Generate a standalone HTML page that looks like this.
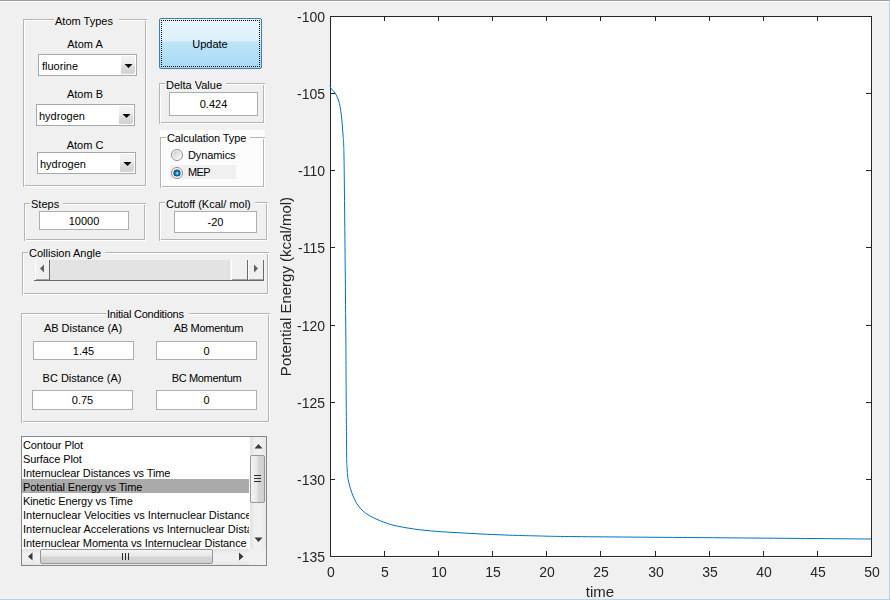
<!DOCTYPE html><html><head><meta charset="utf-8"><style>
html,body{margin:0;padding:0}
body{width:890px;height:600px;background:#f0f0f0;position:relative;overflow:hidden}
.ui{font-family:"Liberation Sans",sans-serif;font-size:11px;line-height:13px;color:#000}
.ax{font-family:"Liberation Sans",sans-serif;font-size:14px;line-height:16px;color:#262626;will-change:transform}
</style></head><body>
<div style="position:absolute;left:0px;top:0px;width:889px;height:1px;background:#9e9e9e"></div>
<div style="position:absolute;left:0px;top:1px;width:889px;height:1px;background:#fff"></div>
<div style="position:absolute;left:889px;top:0px;width:1px;height:600px;background:#b9d1ea"></div>
<div style="position:absolute;left:0px;top:599px;width:890px;height:1px;background:#b9d1ea"></div>
<div style="position:absolute;left:23px;top:19px;width:124px;height:1px;background:#b5b5b5"></div>
<div style="position:absolute;left:23px;top:19px;width:1px;height:168px;background:#b5b5b5"></div>
<div style="position:absolute;left:24px;top:20px;width:123px;height:1px;background:#fff"></div>
<div style="position:absolute;left:24px;top:20px;width:1px;height:167px;background:#fff"></div>
<div style="position:absolute;left:145px;top:21px;width:1px;height:165px;background:#b5b5b5"></div>
<div style="position:absolute;left:25px;top:185px;width:121px;height:1px;background:#b5b5b5"></div>
<div style="position:absolute;left:146px;top:20px;width:1px;height:167px;background:#fff"></div>
<div style="position:absolute;left:24px;top:186px;width:123px;height:1px;background:#fff"></div>
<div class="ui" style="position:absolute;left:54px;top:15px;white-space:nowrap;background:#f0f0f0;padding:0 6px 0 1px;letter-spacing:0px">Atom Types</div>
<div class="ui" style="position:absolute;left:-65px;top:38px;width:300px;text-align:center;">Atom A</div>
<div style="position:absolute;left:38px;top:54px;width:99px;height:22px;background:#fff;border:1px solid #a5a9b1;box-sizing:border-box"></div>
<div style="position:absolute;left:121px;top:56px;width:14px;height:18px;border-radius:0 2px 2px 0;background:linear-gradient(#f3f3f3,#ededed 45%,#dddddd 55%,#d2d2d2)"></div>
<svg style="position:absolute;left:0;top:0" width="890" height="600"><path d="M124.5 64h8l-4 4z" fill="#000"/></svg>
<div class="ui" style="position:absolute;left:42px;top:60px;white-space:nowrap;">fluorine</div>
<div class="ui" style="position:absolute;left:-65px;top:88px;width:300px;text-align:center;">Atom B</div>
<div style="position:absolute;left:36px;top:104px;width:99px;height:22px;background:#fff;border:1px solid #a5a9b1;box-sizing:border-box"></div>
<div style="position:absolute;left:119px;top:106px;width:14px;height:18px;border-radius:0 2px 2px 0;background:linear-gradient(#f3f3f3,#ededed 45%,#dddddd 55%,#d2d2d2)"></div>
<svg style="position:absolute;left:0;top:0" width="890" height="600"><path d="M122.5 114h8l-4 4z" fill="#000"/></svg>
<div class="ui" style="position:absolute;left:39px;top:110px;white-space:nowrap;">hydrogen</div>
<div class="ui" style="position:absolute;left:-65px;top:139px;width:300px;text-align:center;">Atom C</div>
<div style="position:absolute;left:37px;top:152px;width:99px;height:22px;background:#fff;border:1px solid #a5a9b1;box-sizing:border-box"></div>
<div style="position:absolute;left:120px;top:154px;width:14px;height:18px;border-radius:0 2px 2px 0;background:linear-gradient(#f3f3f3,#ededed 45%,#dddddd 55%,#d2d2d2)"></div>
<svg style="position:absolute;left:0;top:0" width="890" height="600"><path d="M123.5 162h8l-4 4z" fill="#000"/></svg>
<div class="ui" style="position:absolute;left:40px;top:158px;white-space:nowrap;">hydrogen</div>
<div style="position:absolute;left:159px;top:18px;width:103px;height:51px;border:1px solid #3c7fb1;border-radius:2px;box-sizing:border-box;background:linear-gradient(#e8f5fc 0px,#dcf0fb 22px,#bde4f8 23px,#a9daf6 49px)"></div>
<svg style="position:absolute;left:0;top:0" width="890" height="600" shape-rendering="crispEdges"><path d="M161 20h1v1h-1zM161 66h1v1h-1zM163 20h1v1h-1zM163 66h1v1h-1zM165 20h1v1h-1zM165 66h1v1h-1zM167 20h1v1h-1zM167 66h1v1h-1zM169 20h1v1h-1zM169 66h1v1h-1zM171 20h1v1h-1zM171 66h1v1h-1zM173 20h1v1h-1zM173 66h1v1h-1zM175 20h1v1h-1zM175 66h1v1h-1zM177 20h1v1h-1zM177 66h1v1h-1zM179 20h1v1h-1zM179 66h1v1h-1zM181 20h1v1h-1zM181 66h1v1h-1zM183 20h1v1h-1zM183 66h1v1h-1zM185 20h1v1h-1zM185 66h1v1h-1zM187 20h1v1h-1zM187 66h1v1h-1zM189 20h1v1h-1zM189 66h1v1h-1zM191 20h1v1h-1zM191 66h1v1h-1zM193 20h1v1h-1zM193 66h1v1h-1zM195 20h1v1h-1zM195 66h1v1h-1zM197 20h1v1h-1zM197 66h1v1h-1zM199 20h1v1h-1zM199 66h1v1h-1zM201 20h1v1h-1zM201 66h1v1h-1zM203 20h1v1h-1zM203 66h1v1h-1zM205 20h1v1h-1zM205 66h1v1h-1zM207 20h1v1h-1zM207 66h1v1h-1zM209 20h1v1h-1zM209 66h1v1h-1zM211 20h1v1h-1zM211 66h1v1h-1zM213 20h1v1h-1zM213 66h1v1h-1zM215 20h1v1h-1zM215 66h1v1h-1zM217 20h1v1h-1zM217 66h1v1h-1zM219 20h1v1h-1zM219 66h1v1h-1zM221 20h1v1h-1zM221 66h1v1h-1zM223 20h1v1h-1zM223 66h1v1h-1zM225 20h1v1h-1zM225 66h1v1h-1zM227 20h1v1h-1zM227 66h1v1h-1zM229 20h1v1h-1zM229 66h1v1h-1zM231 20h1v1h-1zM231 66h1v1h-1zM233 20h1v1h-1zM233 66h1v1h-1zM235 20h1v1h-1zM235 66h1v1h-1zM237 20h1v1h-1zM237 66h1v1h-1zM239 20h1v1h-1zM239 66h1v1h-1zM241 20h1v1h-1zM241 66h1v1h-1zM243 20h1v1h-1zM243 66h1v1h-1zM245 20h1v1h-1zM245 66h1v1h-1zM247 20h1v1h-1zM247 66h1v1h-1zM249 20h1v1h-1zM249 66h1v1h-1zM251 20h1v1h-1zM251 66h1v1h-1zM253 20h1v1h-1zM253 66h1v1h-1zM255 20h1v1h-1zM255 66h1v1h-1zM257 20h1v1h-1zM257 66h1v1h-1zM259 20h1v1h-1zM259 66h1v1h-1zM161 22h1v1h-1zM259 22h1v1h-1zM161 24h1v1h-1zM259 24h1v1h-1zM161 26h1v1h-1zM259 26h1v1h-1zM161 28h1v1h-1zM259 28h1v1h-1zM161 30h1v1h-1zM259 30h1v1h-1zM161 32h1v1h-1zM259 32h1v1h-1zM161 34h1v1h-1zM259 34h1v1h-1zM161 36h1v1h-1zM259 36h1v1h-1zM161 38h1v1h-1zM259 38h1v1h-1zM161 40h1v1h-1zM259 40h1v1h-1zM161 42h1v1h-1zM259 42h1v1h-1zM161 44h1v1h-1zM259 44h1v1h-1zM161 46h1v1h-1zM259 46h1v1h-1zM161 48h1v1h-1zM259 48h1v1h-1zM161 50h1v1h-1zM259 50h1v1h-1zM161 52h1v1h-1zM259 52h1v1h-1zM161 54h1v1h-1zM259 54h1v1h-1zM161 56h1v1h-1zM259 56h1v1h-1zM161 58h1v1h-1zM259 58h1v1h-1zM161 60h1v1h-1zM259 60h1v1h-1zM161 62h1v1h-1zM259 62h1v1h-1zM161 64h1v1h-1zM259 64h1v1h-1z" fill="#000"/></svg>
<div class="ui" style="position:absolute;left:60px;top:38px;width:300px;text-align:center;">Update</div>
<div style="position:absolute;left:159px;top:83px;width:106px;height:1px;background:#b5b5b5"></div>
<div style="position:absolute;left:159px;top:83px;width:1px;height:41px;background:#b5b5b5"></div>
<div style="position:absolute;left:160px;top:84px;width:105px;height:1px;background:#fff"></div>
<div style="position:absolute;left:160px;top:84px;width:1px;height:40px;background:#fff"></div>
<div style="position:absolute;left:263px;top:85px;width:1px;height:38px;background:#b5b5b5"></div>
<div style="position:absolute;left:161px;top:122px;width:103px;height:1px;background:#b5b5b5"></div>
<div style="position:absolute;left:264px;top:84px;width:1px;height:40px;background:#fff"></div>
<div style="position:absolute;left:160px;top:123px;width:105px;height:1px;background:#fff"></div>
<div class="ui" style="position:absolute;left:165px;top:79px;white-space:nowrap;background:#f0f0f0;padding:0 4px 0 1px;letter-spacing:0px">Delta Value</div>
<div style="position:absolute;left:169px;top:92px;width:89px;height:24px;background:#fff;border:1px solid #abadb3;box-sizing:border-box"></div>
<div class="ui" style="position:absolute;left:169px;width:89px;top:98px;text-align:center">0.424</div>
<div style="position:absolute;left:160px;top:130px;width:105px;height:58px;background:#fcfcfc"></div>
<div style="position:absolute;left:160px;top:137px;width:105px;height:1px;background:#b5b5b5"></div>
<div style="position:absolute;left:160px;top:137px;width:1px;height:51px;background:#b5b5b5"></div>
<div style="position:absolute;left:161px;top:138px;width:104px;height:1px;background:#fff"></div>
<div style="position:absolute;left:161px;top:138px;width:1px;height:50px;background:#fff"></div>
<div style="position:absolute;left:263px;top:139px;width:1px;height:48px;background:#b5b5b5"></div>
<div style="position:absolute;left:162px;top:186px;width:102px;height:1px;background:#b5b5b5"></div>
<div style="position:absolute;left:264px;top:138px;width:1px;height:50px;background:#fff"></div>
<div style="position:absolute;left:161px;top:187px;width:104px;height:1px;background:#fff"></div>
<div class="ui" style="position:absolute;left:166px;top:132px;white-space:nowrap;background:#fcfcfc;padding:0 4px 0 1px;letter-spacing:-0.12px">Calculation Type</div>
<div style="position:absolute;left:170px;top:165px;width:66px;height:14px;background:#f0f0f0"></div>
<svg style="position:absolute;left:0;top:0" width="890" height="600"><defs><linearGradient id="rg" x1="0" y1="0" x2="1" y2="1"><stop offset="0" stop-color="#c4c8cd"/><stop offset="0.5" stop-color="#e2e4e6"/><stop offset="1" stop-color="#fafafa"/></linearGradient><radialGradient id="bl" cx="50%" cy="50%" r="50%" fx="55%" fy="55%"><stop offset="0" stop-color="#b8f4ff"/><stop offset="0.35" stop-color="#2fa8e2"/><stop offset="0.7" stop-color="#0d5f9c"/><stop offset="1" stop-color="#0b2f58"/></radialGradient></defs><circle cx="177" cy="155" r="5.5" fill="#fff" stroke="#8a8a8a" stroke-width="1"/><circle cx="177" cy="155" r="4" fill="url(#rg)"/><circle cx="177" cy="173" r="5.5" fill="#fff" stroke="#8a8a8a" stroke-width="1"/><circle cx="177" cy="173" r="3.6" fill="url(#bl)"/></svg>
<div class="ui" style="position:absolute;left:188px;top:148.5px;white-space:nowrap;letter-spacing:-0.1px">Dynamics</div>
<div class="ui" style="position:absolute;left:188px;top:166px;white-space:nowrap;letter-spacing:-0.6px">MEP</div>
<div style="position:absolute;left:24px;top:203px;width:122px;height:1px;background:#b5b5b5"></div>
<div style="position:absolute;left:24px;top:203px;width:1px;height:38px;background:#b5b5b5"></div>
<div style="position:absolute;left:25px;top:204px;width:121px;height:1px;background:#fff"></div>
<div style="position:absolute;left:25px;top:204px;width:1px;height:37px;background:#fff"></div>
<div style="position:absolute;left:144px;top:205px;width:1px;height:35px;background:#b5b5b5"></div>
<div style="position:absolute;left:26px;top:239px;width:119px;height:1px;background:#b5b5b5"></div>
<div style="position:absolute;left:145px;top:204px;width:1px;height:37px;background:#fff"></div>
<div style="position:absolute;left:25px;top:240px;width:121px;height:1px;background:#fff"></div>
<div class="ui" style="position:absolute;left:30px;top:198px;white-space:nowrap;background:#f0f0f0;padding:0 4px 0 1px;letter-spacing:0px">Steps</div>
<div style="position:absolute;left:39px;top:211px;width:90px;height:19px;background:#fff;border:1px solid #abadb3;box-sizing:border-box"></div>
<div class="ui" style="position:absolute;left:39px;width:90px;top:215px;text-align:center">10000</div>
<div style="position:absolute;left:159px;top:202px;width:109px;height:1px;background:#b5b5b5"></div>
<div style="position:absolute;left:159px;top:202px;width:1px;height:39px;background:#b5b5b5"></div>
<div style="position:absolute;left:160px;top:203px;width:108px;height:1px;background:#fff"></div>
<div style="position:absolute;left:160px;top:203px;width:1px;height:38px;background:#fff"></div>
<div style="position:absolute;left:266px;top:204px;width:1px;height:36px;background:#b5b5b5"></div>
<div style="position:absolute;left:161px;top:239px;width:106px;height:1px;background:#b5b5b5"></div>
<div style="position:absolute;left:267px;top:203px;width:1px;height:38px;background:#fff"></div>
<div style="position:absolute;left:160px;top:240px;width:108px;height:1px;background:#fff"></div>
<div class="ui" style="position:absolute;left:165px;top:198px;white-space:nowrap;background:#f0f0f0;padding:0 4px 0 1px;letter-spacing:0px">Cutoff (Kcal/ mol)</div>
<div style="position:absolute;left:174px;top:211px;width:83px;height:22px;background:#fff;border:1px solid #abadb3;box-sizing:border-box"></div>
<div class="ui" style="position:absolute;left:174px;width:83px;top:216px;text-align:center">-20</div>
<div style="position:absolute;left:22px;top:252px;width:247px;height:1px;background:#b5b5b5"></div>
<div style="position:absolute;left:22px;top:252px;width:1px;height:43px;background:#b5b5b5"></div>
<div style="position:absolute;left:23px;top:253px;width:246px;height:1px;background:#fff"></div>
<div style="position:absolute;left:23px;top:253px;width:1px;height:42px;background:#fff"></div>
<div style="position:absolute;left:267px;top:254px;width:1px;height:40px;background:#b5b5b5"></div>
<div style="position:absolute;left:24px;top:293px;width:244px;height:1px;background:#b5b5b5"></div>
<div style="position:absolute;left:268px;top:253px;width:1px;height:42px;background:#fff"></div>
<div style="position:absolute;left:23px;top:294px;width:246px;height:1px;background:#fff"></div>
<div class="ui" style="position:absolute;left:28px;top:247px;white-space:nowrap;background:#f0f0f0;padding:0 4px 0 1px;letter-spacing:0px">Collision Angle</div>
<div style="position:absolute;left:34px;top:260px;width:230px;height:21px;background:#e3e3e3"></div>
<div style="position:absolute;left:34px;top:260px;width:16px;height:21px;background:#f0f0f0"></div>
<div style="position:absolute;left:35px;top:260px;width:1px;height:20px;background:#fff"></div>
<div style="position:absolute;left:49px;top:260px;width:1px;height:21px;background:#696969"></div>
<div style="position:absolute;left:34px;top:280px;width:16px;height:1px;background:#696969"></div>
<div style="position:absolute;left:36px;top:279px;width:13px;height:1px;background:#a0a0a0"></div>
<div style="position:absolute;left:247px;top:260px;width:17px;height:21px;background:#f0f0f0"></div>
<div style="position:absolute;left:248px;top:260px;width:1px;height:20px;background:#fff"></div>
<div style="position:absolute;left:263px;top:260px;width:1px;height:21px;background:#696969"></div>
<div style="position:absolute;left:247px;top:280px;width:17px;height:1px;background:#696969"></div>
<div style="position:absolute;left:249px;top:279px;width:14px;height:1px;background:#a0a0a0"></div>
<div style="position:absolute;left:230px;top:260px;width:18px;height:21px;background:#f0f0f0"></div>
<div style="position:absolute;left:231px;top:260px;width:1px;height:20px;background:#fff"></div>
<div style="position:absolute;left:247px;top:260px;width:1px;height:21px;background:#696969"></div>
<div style="position:absolute;left:230px;top:280px;width:18px;height:1px;background:#696969"></div>
<div style="position:absolute;left:232px;top:279px;width:15px;height:1px;background:#a0a0a0"></div>
<div style="position:absolute;left:50px;top:280px;width:181px;height:1px;background:#696969"></div>
<svg style="position:absolute;left:0;top:0" width="890" height="600"><path d="M44 264.5v8l-4-4z" fill="#606060"/><path d="M254 264.5v8l4-4z" fill="#606060"/></svg>
<div style="position:absolute;left:21px;top:313px;width:249px;height:1px;background:#b5b5b5"></div>
<div style="position:absolute;left:21px;top:313px;width:1px;height:110px;background:#b5b5b5"></div>
<div style="position:absolute;left:22px;top:314px;width:248px;height:1px;background:#fff"></div>
<div style="position:absolute;left:22px;top:314px;width:1px;height:109px;background:#fff"></div>
<div style="position:absolute;left:268px;top:315px;width:1px;height:107px;background:#b5b5b5"></div>
<div style="position:absolute;left:23px;top:421px;width:246px;height:1px;background:#b5b5b5"></div>
<div style="position:absolute;left:269px;top:314px;width:1px;height:109px;background:#fff"></div>
<div style="position:absolute;left:22px;top:422px;width:248px;height:1px;background:#fff"></div>
<div class="ui" style="position:absolute;left:106px;top:308px;white-space:nowrap;background:#f0f0f0;padding:0 5px 0 1px;letter-spacing:-0.22px">Initial Conditions</div>
<div class="ui" style="position:absolute;left:-67px;top:322px;width:300px;text-align:center;">AB Distance (A)</div>
<div class="ui" style="position:absolute;left:58.5px;top:322px;width:300px;text-align:center;letter-spacing:-0.3px">AB Momentum</div>
<div style="position:absolute;left:33px;top:341px;width:101px;height:19px;background:#fff;border:1px solid #abadb3;box-sizing:border-box"></div>
<div class="ui" style="position:absolute;left:33px;width:101px;top:345px;text-align:center">1.45</div>
<div style="position:absolute;left:156px;top:341px;width:101px;height:19px;background:#fff;border:1px solid #abadb3;box-sizing:border-box"></div>
<div class="ui" style="position:absolute;left:156px;width:101px;top:345px;text-align:center">0</div>
<div class="ui" style="position:absolute;left:-68px;top:372px;width:300px;text-align:center;">BC Distance (A)</div>
<div class="ui" style="position:absolute;left:56.5px;top:372px;width:300px;text-align:center;letter-spacing:-0.35px">BC Momentum</div>
<div style="position:absolute;left:32px;top:390px;width:101px;height:20px;background:#fff;border:1px solid #abadb3;box-sizing:border-box"></div>
<div class="ui" style="position:absolute;left:32px;width:101px;top:394px;text-align:center">0.75</div>
<div style="position:absolute;left:156px;top:390px;width:101px;height:20px;background:#fff;border:1px solid #abadb3;box-sizing:border-box"></div>
<div class="ui" style="position:absolute;left:156px;width:101px;top:394px;text-align:center">0</div>
<div style="position:absolute;left:21px;top:436px;width:246px;height:130px;background:#fff;border:1px solid #828790;box-sizing:border-box"></div>
<div style="position:absolute;left:22px;top:437px;width:227px;height:112px;overflow:hidden">
<div class="ui" style="position:absolute;left:0;top:0px;width:227px;height:14px;line-height:16px;white-space:nowrap;padding-left:1px;letter-spacing:-0.1px;">Contour Plot</div>
<div class="ui" style="position:absolute;left:0;top:14px;width:227px;height:14px;line-height:16px;white-space:nowrap;padding-left:1px;letter-spacing:-0.1px;">Surface Plot</div>
<div class="ui" style="position:absolute;left:0;top:28px;width:227px;height:14px;line-height:16px;white-space:nowrap;padding-left:1px;letter-spacing:-0.1px;">Internuclear Distances vs Time</div>
<div class="ui" style="position:absolute;left:0;top:42px;width:227px;height:14px;line-height:16px;white-space:nowrap;padding-left:1px;letter-spacing:-0.1px;background:#aaaaaa;">Potential Energy vs Time</div>
<div class="ui" style="position:absolute;left:0;top:56px;width:227px;height:14px;line-height:16px;white-space:nowrap;padding-left:1px;letter-spacing:-0.1px;">Kinetic Energy vs Time</div>
<div class="ui" style="position:absolute;left:0;top:70px;width:227px;height:14px;line-height:16px;white-space:nowrap;padding-left:1px;letter-spacing:0px;">Internuclear Velocities vs Internuclear Distance</div>
<div class="ui" style="position:absolute;left:0;top:84px;width:227px;height:14px;line-height:16px;white-space:nowrap;padding-left:1px;letter-spacing:0px;">Internuclear Accelerations vs Internuclear Distances</div>
<div class="ui" style="position:absolute;left:0;top:98px;width:227px;height:14px;line-height:16px;white-space:nowrap;padding-left:1px;letter-spacing:-0.1px;">Internuclear Momenta vs Internuclear Distance</div>
</div>
<div style="position:absolute;left:250px;top:437px;width:16px;height:112px;background:linear-gradient(90deg,#e2e2e2,#f0f0f0 30%,#f0f0f0 70%,#e6e6e6)"></div>
<div style="position:absolute;left:250px;top:455px;width:15px;height:48px;border:1px solid #979797;border-radius:2px;box-sizing:border-box;background:linear-gradient(90deg,#f4f4f4,#e8e8e8 45%,#d6d6d6 55%,#cfcfcf)"></div>
<svg style="position:absolute;left:0;top:0" width="890" height="600" shape-rendering="crispEdges"><path d="M254 475.5h7M254 478.5h7M254 481.5h7" stroke="#2a2a2a"/></svg>
<svg style="position:absolute;left:0;top:0" width="890" height="600"><path d="M254.5 448.5h8l-4-4.5z" fill="#3a3a3a"/><path d="M254.5 537.5h8l-4 4.5z" fill="#3a3a3a"/></svg>
<div style="position:absolute;left:22px;top:549px;width:227px;height:16px;background:linear-gradient(#e2e2e2,#f0f0f0 30%,#f0f0f0 70%,#e6e6e6)"></div>
<div style="position:absolute;left:249px;top:549px;width:17px;height:16px;background:#f0f0f0"></div>
<div style="position:absolute;left:40px;top:549px;width:173px;height:15px;border:1px solid #979797;border-radius:2px;box-sizing:border-box;background:linear-gradient(#f4f4f4,#e8e8e8 45%,#d6d6d6 55%,#cfcfcf)"></div>
<svg style="position:absolute;left:0;top:0" width="890" height="600" shape-rendering="crispEdges"><path d="M122.5 553v7M125.5 553v7M128.5 553v7" stroke="#2a2a2a"/></svg>
<svg style="position:absolute;left:0;top:0" width="890" height="600"><path d="M32.5 552.5v8l-4.5-4z" fill="#3a3a3a"/><path d="M239 552.5v8l4.5-4z" fill="#3a3a3a"/></svg>
<div style="position:absolute;left:330px;top:16px;width:542px;height:542px;background:#fff"></div>
<svg style="position:absolute;left:0;top:0" width="890" height="600" shape-rendering="crispEdges"><rect x="330.5" y="16.5" width="541" height="540" fill="none" stroke="#262626" stroke-width="1"/><path d="M330.5 556v-5M330.5 16v5" stroke="#262626"/><path d="M384.5 556v-5M384.5 16v5" stroke="#262626"/><path d="M438.5 556v-5M438.5 16v5" stroke="#262626"/><path d="M492.5 556v-5M492.5 16v5" stroke="#262626"/><path d="M546.5 556v-5M546.5 16v5" stroke="#262626"/><path d="M600.5 556v-5M600.5 16v5" stroke="#262626"/><path d="M655.5 556v-5M655.5 16v5" stroke="#262626"/><path d="M709.5 556v-5M709.5 16v5" stroke="#262626"/><path d="M763.5 556v-5M763.5 16v5" stroke="#262626"/><path d="M817.5 556v-5M817.5 16v5" stroke="#262626"/><path d="M871.5 556v-5M871.5 16v5" stroke="#262626"/><path d="M330 16.5h5M871 16.5h-5" stroke="#262626"/><path d="M330 93.5h5M871 93.5h-5" stroke="#262626"/><path d="M330 170.5h5M871 170.5h-5" stroke="#262626"/><path d="M330 247.5h5M871 247.5h-5" stroke="#262626"/><path d="M330 325.5h5M871 325.5h-5" stroke="#262626"/><path d="M330 402.5h5M871 402.5h-5" stroke="#262626"/><path d="M330 479.5h5M871 479.5h-5" stroke="#262626"/><path d="M330 556.5h5M871 556.5h-5" stroke="#262626"/></svg>
<div class="ax" style="position:absolute;left:180.5px;top:564px;width:300px;text-align:center;">0</div>
<div class="ax" style="position:absolute;left:234.5px;top:564px;width:300px;text-align:center;">5</div>
<div class="ax" style="position:absolute;left:288.5px;top:564px;width:300px;text-align:center;">10</div>
<div class="ax" style="position:absolute;left:342.5px;top:564px;width:300px;text-align:center;">15</div>
<div class="ax" style="position:absolute;left:396.5px;top:564px;width:300px;text-align:center;">20</div>
<div class="ax" style="position:absolute;left:450.5px;top:564px;width:300px;text-align:center;">25</div>
<div class="ax" style="position:absolute;left:505.5px;top:564px;width:300px;text-align:center;">30</div>
<div class="ax" style="position:absolute;left:559.5px;top:564px;width:300px;text-align:center;">35</div>
<div class="ax" style="position:absolute;left:613.5px;top:564px;width:300px;text-align:center;">40</div>
<div class="ax" style="position:absolute;left:667.5px;top:564px;width:300px;text-align:center;">45</div>
<div class="ax" style="position:absolute;left:721.5px;top:564px;width:300px;text-align:center;">50</div>
<div class="ax" style="position:absolute;left:25px;top:9px;width:300px;text-align:right;">-100</div>
<div class="ax" style="position:absolute;left:25px;top:86px;width:300px;text-align:right;">-105</div>
<div class="ax" style="position:absolute;left:25px;top:163px;width:300px;text-align:right;">-110</div>
<div class="ax" style="position:absolute;left:25px;top:240px;width:300px;text-align:right;">-115</div>
<div class="ax" style="position:absolute;left:25px;top:318px;width:300px;text-align:right;">-120</div>
<div class="ax" style="position:absolute;left:25px;top:395px;width:300px;text-align:right;">-125</div>
<div class="ax" style="position:absolute;left:25px;top:472px;width:300px;text-align:right;">-130</div>
<div class="ax" style="position:absolute;left:25px;top:549px;width:300px;text-align:right;">-135</div>
<div class="ax" style="position:absolute;left:450px;top:583px;width:300px;text-align:center;font-size:15px;line-height:17px">time</div>
<div class="ax" style="will-change:auto;position:absolute;left:285px;top:286.5px;width:0;height:0"><div style="position:absolute;left:-150px;top:-8.5px;width:300px;text-align:center;font-size:15px;line-height:17px;transform:rotate(-90deg)">Potential Energy (kcal/mol)</div></div>
<svg style="position:absolute;left:0;top:0" width="890" height="600"><path d="M330.00 85.00 C330.13 85.50 330.32 87.10 330.80 88.00 C331.28 88.90 332.15 89.52 332.90 90.40 C333.65 91.28 334.58 92.18 335.30 93.30 C336.02 94.42 336.62 95.77 337.20 97.10 C337.78 98.43 338.32 99.70 338.80 101.30 C339.28 102.90 339.68 104.42 340.10 106.70 C340.52 108.98 340.93 111.95 341.30 115.00 C341.67 118.05 342.02 121.67 342.30 125.00 C342.58 128.33 342.77 131.67 343.00 135.00 C343.23 138.33 343.48 137.50 343.70 145.00 C343.92 152.50 343.97 150.83 344.30 180.00 C344.63 209.17 345.38 283.33 345.70 320.00 C346.02 356.67 346.04 377.50 346.20 400.00 C346.36 422.50 346.52 443.88 346.65 455.00 C346.78 466.12 346.79 462.82 347.00 466.70 C347.21 470.58 347.32 474.62 347.90 478.30 C348.48 481.98 349.48 485.48 350.50 488.80 C351.52 492.12 352.63 495.28 354.00 498.20 C355.37 501.12 356.75 503.78 358.70 506.30 C360.65 508.82 362.98 511.27 365.70 513.30 C368.42 515.33 371.58 516.88 375.00 518.50 C378.42 520.12 382.45 521.72 386.20 523.00 C389.95 524.28 391.87 525.07 397.50 526.20 C403.13 527.33 412.52 528.87 420.00 529.80 C427.48 530.73 434.92 531.25 442.40 531.80 C449.88 532.35 457.40 532.68 464.90 533.10 C472.40 533.52 479.92 533.95 487.40 534.30 C494.88 534.65 502.32 534.95 509.80 535.20 C517.28 535.45 521.43 535.57 532.30 535.80 C543.17 536.03 543.38 536.27 575.00 536.60 C606.62 536.93 672.67 537.40 722.00 537.80 C771.33 538.20 846.17 538.80 871.00 539.00" fill="none" stroke="#0072bd" stroke-width="1"/></svg>
</body></html>
